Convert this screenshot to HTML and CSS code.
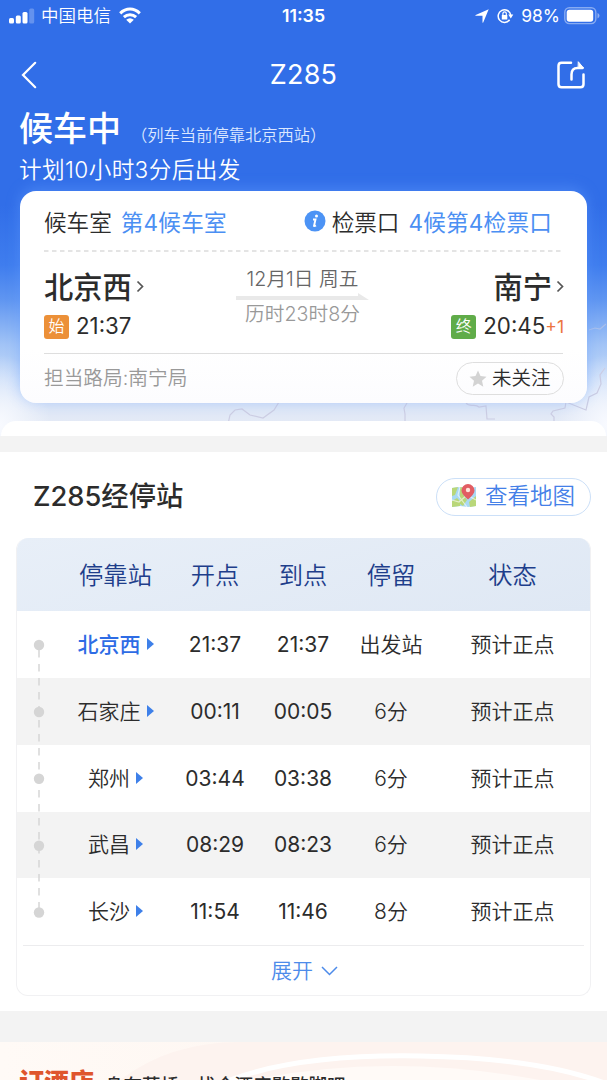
FILE: index.html
```html
<!DOCTYPE html>
<html lang="zh-CN">
<head>
<meta charset="utf-8">
<title>Z285</title>
<link rel="stylesheet" href="styles.css">
</head>
<body>
<div class="page">
  <header class="hero">
    <svg class="hero-map" width="607" height="250" viewBox="0 0 607 250" fill="none" stroke="#cccde3" stroke-width="1.2">
      <path d="M228 251l2-9 5-5 7-1 8 6 13 3 11-8 5-8"/>
      <path d="M405 251v-10l-1-6 3-5M466 230c4 5 9 0 13 4l7-1 1 13h8M554 251v-7l-3-3 2-3 12-3 1-6 20 8 3-13 8-4 4-9-1-9 5-7"/>
      <path opacity=".5" d="M589 157l6-2 5 1 6-5"/>
    </svg>
    <div class="status">
      <div class="status-left">
        <svg width="26" height="16" viewBox="0 0 26 16" fill="#fff"><rect y="10" width="5" height="5.500" rx="1.500"/><rect x="6.800" y="7.500" width="5" height="8" rx="1.500"/><rect x="13.500" y="4" width="5" height="11.500" rx="1.500"/><rect x="20.200" y="0.500" width="5" height="15" rx="1.500" opacity=".25"/></svg>
        <span class="carrier">中国电信</span>
        <svg width="22" height="17" viewBox="0 0 22 17" fill="none" stroke="#fff"><path stroke-width="3" d="M1.200 6.300C7 .7 15 .7 20.800 6.300M4.900 10.200c3.500-3.300 8.700-3.300 12.200 0"/><path fill="#fff" stroke="none" d="M11 16.500l-3.800-3.800q3.800-3 7.600 0z"/></svg>
      </div>
      <span class="clock">11:35</span>
      <div class="status-right">
        <svg width="14" height="14" viewBox="0 0 14 14" fill="#fff"><path d="M13.700.3L8.200 13.400q-.5.700-.7-.2V6.800H.9q-1-.2-.2-.7z"/></svg>
        <svg class="lock" width="17" height="16" viewBox="0 0 17 16" fill="none" stroke="#fff"><path stroke-width="1.500" d="M12.600 11.800A6.300 6.300 0 1 1 13.700 7"/><path fill="#fff" stroke="none" d="M11.300 6.500h5l-2.500 4zM4.800 7h5.500v4.500H4.800z"/><path stroke-width="1.200" d="M5.900 7V5.600a1.700 1.700 0 0 1 3.400 0V7"/></svg>
        <span class="percent">98%</span>
        <svg width="36" height="18" viewBox="0 0 36 18"><rect x=".8" y=".8" width="31" height="15.800" rx="4.500" fill="none" stroke="#fff" stroke-opacity=".42" stroke-width="1.400"/><rect x="2.700" y="2.700" width="26.500" height="12" rx="2.700" fill="#fff"/><path d="M33.500 6q2 .8 2 2.700t-2 2.700z" fill="#fff" opacity=".45"/></svg>
      </div>
    </div>
    <nav class="nav">
      <svg width="16" height="28" viewBox="0 0 16 28" fill="none" stroke="#fff" stroke-width="2.200" stroke-linecap="round"><path d="M14.200 1.800L2 14l12.200 12.200"/></svg>
      <h1>Z285</h1>
      <svg width="28" height="28" viewBox="0 0 28 28" fill="none" stroke="#fff" stroke-width="2.500" stroke-linecap="round" stroke-linejoin="round"><path d="M14 1.800H4.500Q1.500 1.800 1.500 4.800v18.500q0 3 3 3h19q3 0 3-3V13.500"/><path d="M14.500 18.500v-5q0-6.500 6-6.500h5"/><path d="M21.500 1l5 6-5 .1z" fill="#fff" stroke-width="1"/></svg>
    </nav>
    <div class="headline"><strong>候车中</strong><span>（列车当前停靠北京西站）</span></div>
    <p class="countdown">计划10小时3分后出发</p>

    <section class="card">
      <div class="gates">
        <span>候车室</span><span class="blue room">第4候车室</span>
        <svg class="info" width="22" height="22" viewBox="0 0 22 22"><circle cx="11" cy="11" r="10.500" fill="#4c93f5"/><circle cx="12.500" cy="5.900" r="1.500" fill="#fff"/><path d="M9 9.500h2.500l-1.500 6.500q.7.300 2-.5" fill="none" stroke="#fff" stroke-width="1.900"/></svg>
        <span>检票口</span><span class="blue gate">4候第4检票口</span>
      </div>
      <svg class="dashes" width="520" height="2"><path d="M0 1h520" stroke="#dcdcdc" stroke-width="1.500" stroke-dasharray="4.500 3.500"/></svg>
      <div class="route">
        <div class="stop">
          <div class="city">北京西<svg width="8" height="13" viewBox="0 0 8 13"><path d="M1.500 1.500l5 5-5 5"/></svg></div>
          <div class="time"><i class="start">始</i><span>21:37</span></div>
        </div>
        <div class="middle">
          <span class="date">12月1日 周五</span>
          <svg width="133" height="8" viewBox="0 0 133 8"><path d="M0 3h122V0l11 7H0z" fill="#e9e9e9"/></svg>
          <span class="duration">历时23时8分</span>
        </div>
        <div class="stop end">
          <div class="city">南宁<svg width="8" height="13" viewBox="0 0 8 13"><path d="M1.500 1.500l5 5-5 5"/></svg></div>
          <div class="time"><i class="finish">终</i><span>20:45</span><small>+1</small></div>
        </div>
      </div>
      <div class="bureau">
        <span class="bureau-name">担当路局:南宁局</span>
        <div class="follow"><svg width="18" height="18" viewBox="0 0 18 18"><path d="M9 .5l2.500 5.600 6 .6-4.500 4 1.300 6L9 13.600l-5.300 3.100 1.300-6-4.500-4 6-.6z" fill="#d3d3d3"/></svg><span>未关注</span></div>
      </div>
    </section>
  </header>
  <div class="sheet-edge"></div>

  <main class="stations">
    <div class="title">
      <h2>Z285经停站</h2>
      <div class="map-button">
        <svg width="26" height="25" viewBox="0 0 26 25"><path d="M1 4l8-1 8 1 8-1v19l-8 1-8-1-8 1z" fill="#a9d9f4"/><path d="M1 4l6-1-3 8-3 1zM9 3l6 1-3 6 4 6-4 6-3-2zM1 17l5-3 3 3v5l-8 1zM18 18l7-6v10l-6 1z" fill="#b9d779"/><path d="M1 16l7 2 8-7 9 5M9 3l-2 8 9 12" fill="none" stroke="#fff" stroke-opacity=".6" stroke-width="1.200"/><path d="M17 15.500q-6.500-5.500-6.500-9a6.500 6.500 0 0 1 13 0q0 3.500-6.500 9z" fill="#e25d63"/><circle cx="17" cy="6" r="2.200" fill="#ffe5dc"/></svg>
        <span>查看地图</span>
      </div>
    </div>
    <div class="table">
      <div class="row head"><span></span><span>停靠站</span><span>开点</span><span>到点</span><span>停留</span><span>状态</span></div>
      <div class="body">
        <svg class="track" width="12" height="280" viewBox="0 0 12 280"><path d="M6 10v262" stroke="#d6d6d6" stroke-width="1.500" stroke-dasharray="7.500 6.500" stroke-dashoffset="-1"/><g fill="#d5d5d5"><circle cx="6" cy="6" r="5.200"/><circle cx="6" cy="73" r="5.200"/><circle cx="6" cy="139.700" r="5.200"/><circle cx="6" cy="206.700" r="5.200"/><circle cx="6" cy="273.500" r="5.200"/></g></svg>
        <div class="row current"><span></span><span class="cn">北京西<b></b></span><span>21:37</span><span>21:37</span><span class="cn">出发站</span><span class="cn">预计正点</span></div>
        <div class="row"><span></span><span class="cn">石家庄<b></b></span><span>00:11</span><span>00:05</span><span class="cn">6分</span><span class="cn">预计正点</span></div>
        <div class="row"><span></span><span class="cn">郑州<b></b></span><span>03:44</span><span>03:38</span><span class="cn">6分</span><span class="cn">预计正点</span></div>
        <div class="row"><span></span><span class="cn">武昌<b></b></span><span>08:29</span><span>08:23</span><span class="cn">6分</span><span class="cn">预计正点</span></div>
        <div class="row"><span></span><span class="cn">长沙<b></b></span><span>11:54</span><span>11:46</span><span class="cn">8分</span><span class="cn">预计正点</span></div>
      </div>
      <div class="expand"><span class="cn">展开</span><svg width="17" height="10" viewBox="0 0 17 10" fill="none" stroke="#4d8bea" stroke-width="1.500"><path d="M1 1l7.500 7.500L16 1"/></svg></div>
    </div>
  </main>
  <footer class="hotel">
    <svg class="arcs" width="607" height="38" viewBox="0 0 607 38" fill="none"><path d="M120 38Q170 0 240 0H607V38z" fill="#fdf3ef"/><path d="M230 38Q300 12 420 14T607 42" stroke="#fff" stroke-width="5"/><path d="M250 38Q390 10 540 38z" fill="#fffaf7"/></svg>
    <strong>订酒店</strong><span>身在草桥，找个酒店歇歇脚吧</span>
  </footer>
</div>
</body>
</html>
```
FILE: styles.css
```css
* { box-sizing: border-box; }
body { margin: 0; background: #fff; color: #2c2c2c; font-family: Inter, "Noto Sans CJK SC", sans-serif; }
h1, h2, p { margin: 0; }
svg { display: block; flex: none; }
span, strong { white-space: nowrap; }
.page { width: 607px; height: 1080px; overflow: hidden; background: #f3f3f3; }

.hero {
  position: relative; height: 436px; color: #fff;
  background:
    radial-gradient(ellipse 50px 70px at 0 425px, #f8faff 0, transparent 100%),
    radial-gradient(ellipse 50px 70px at 607px 425px, #f8faff 0, transparent 100%),
    linear-gradient(#316ee8 0, #316ee8 205px, #3f7dee 265px, #6096f1 300px, #a2c4f6 345px, #c6daf8 380px, #dbe5f6 405px, #e4eaf6 421px);
}
.hero-map { position: absolute; left: 0; top: 173px; }
.status { position: relative; display: grid; grid-template-columns: 1fr auto 1fr; align-items: center; height: 32px; padding: 0 10px 1px; line-height: 30px; }
.status-left, .status-right { display: flex; align-items: center; }
.status-left { margin-left: -1px; }
.carrier { margin: 0 8px 0 6px; font-size: 17.500px; font-weight: 350; }
.clock { font-size: 17.800px; font-weight: 600; }
.status-right { justify-content: flex-end; margin-right: -3px; }
.lock { margin: 0 7px 0 8px; }
.percent { margin-right: 4px; font-size: 17.500px; }
.nav { display: flex; align-items: center; justify-content: space-between; height: 86px; padding: 0 22px 0 21px; }
.nav h1 { font-size: 27px; font-weight: 400; letter-spacing: .2px; line-height: 86px; padding-left: 13px; }
.headline { display: flex; height: 22px; padding-left: 19px; line-height: 22px; }
.headline strong { font-size: 34px; font-weight: 500; }
.headline span { margin-left: 10px; padding-top: 6px; font-size: 16.300px; font-weight: 350; color: #dce8ff; }
.countdown { height: 51px; padding: 15px 0 0 19px; font-size: 22.600px; letter-spacing: .4px; line-height: 30px; font-weight: 350; }

.card { position: relative; height: 212px; margin: 0 20px; padding: 0 24px; border-radius: 16px; color: #2c2c2c; background: linear-gradient(#fff 75%, #fcfcfe); box-shadow: 0 -3px 14px rgba(99, 157, 255, .45); }
.gates { display: flex; align-items: center; height: 59px; padding: 1px 11px 0 0; font-size: 22.600px; font-weight: 350; }
.gates .blue { color: #4b8ff3; font-weight: 400; }
.room { margin-left: 9px; letter-spacing: .2px; }
.gate { margin-left: 9px; letter-spacing: .2px; }
.info { margin: 0 6px 0 auto; }
.route { display: grid; grid-template-columns: 1fr 133px 1fr; height: 101px; padding-top: 11px; }
.city { display: flex; align-items: center; height: 44px; font-size: 29.300px; font-weight: 500; }
.city svg { margin: 2px 0 0 4px; fill: none; stroke: #555; stroke-width: 1.700; }
.time { display: flex; align-items: center; height: 33px; margin-top: 3px; font-size: 22.300px; line-height: 33px; }
.time span { margin-top: -2px; }
.time i { width: 25px; height: 24px; margin-right: 7px; border-radius: 3px; color: #fff; font-size: 16px; line-height: 23px; text-align: center; font-style: normal; font-weight: 350; }
.start { background: #ec9038; }
.finish { background: #60ac49; }
.time small { color: #ec7540; font-size: 17.500px; }
.end .city, .end .time { justify-content: flex-end; margin-right: -1px; }
.middle { display: flex; flex-direction: column; align-items: center; margin-left: -2px; padding-top: 3px; font-size: 19.700px; line-height: 27px; font-weight: 350; }
.date { color: #666; }
.duration { color: #999; line-height: 26px; }
.bureau { display: flex; align-items: center; justify-content: space-between; height: 50px; border-top: 1px solid #dedede; color: #999; font-size: 19.700px; font-weight: 350; }
.bureau-name { padding-bottom: 4px; }
.follow { display: flex; align-items: center; gap: 5px; width: 108px; height: 33px; margin-right: -1px; padding-left: 12px; border: 1px solid #dedede; border-radius: 17px; color: #2c2c2c; font-size: 19.500px; line-height: 28px; }
.follow span { padding-bottom: 1px; }
.sheet-edge { position: relative; height: 15px; margin: -15px 1px 0; border-radius: 18px 18px 0 0; background: #fff; }

.stations { height: 559px; margin-top: 16px; padding: 0 16px; background: #fff; }
.title { display: flex; align-items: center; justify-content: space-between; height: 86px; padding: 3px 0 0 17px; }
.title h2 { font-size: 27.300px; line-height: 36px; font-weight: 500; }
.map-button { display: flex; align-items: center; gap: 8px; width: 155px; height: 38px; padding-left: 14px; border: 1px solid #cce0f8; border-radius: 19px; color: #4480e8; font-size: 22.500px; font-weight: 350; line-height: 30px; }
.map-button span { padding-bottom: 1px; }
.table { height: 458px; border: 1px solid #f1f1f3; border-top: 0; border-radius: 12px; overflow: hidden; }
.row { display: grid; grid-template-columns: 45px 109px 88px 88px 88px 155px; align-items: center; height: 67px; font-size: 21px; text-align: center; }
.row:nth-child(odd):not(.head) { background: #f3f3f3; }
.row.head { height: 73px; padding-bottom: 2px; background: linear-gradient(165deg, #e8eff8, #dfe8f4); color: #1e3e8b; font-size: 24.300px; font-weight: 350; }
.row.head span:nth-child(2) { padding-right: 2px; }
.cn { padding-bottom: 3px; font-weight: 350; }
.body { position: relative; height: 334px; }
.body .row:nth-child(4), .body .row:nth-child(5) { height: 66.500px; }
.track { position: absolute; left: 16px; top: 27.500px; }
.row b { display: inline-block; margin-left: 6px; border-left: 7px solid #3e80e9; border-top: 6px solid transparent; border-bottom: 6px solid transparent; vertical-align: 2px; }
.row .cn:nth-child(2) { padding-right: 2px; }
.current .cn:nth-child(2) { color: #2e6ce5; font-weight: 500; }
.expand { display: flex; align-items: center; justify-content: center; gap: 8px; height: 50px; margin: 0 6px; padding-left: 2px; border-top: 1px solid #ececee; color: #4d8bea; font-size: 21px; }

.hotel { position: relative; display: flex; height: 38px; margin-top: 31px; padding: 28px 0 0 19px; background: linear-gradient(90deg, #fffaf6, #fdf3ee); overflow: hidden; }
.arcs { position: absolute; left: 0; top: 0; }
.hotel strong { position: relative; color: #df552d; font-size: 25px; font-weight: 800; line-height: 25px; }
.hotel span { position: relative; margin-left: 11px; padding-top: 4px; font-size: 18.500px; font-weight: 500; line-height: 22px; }
```
